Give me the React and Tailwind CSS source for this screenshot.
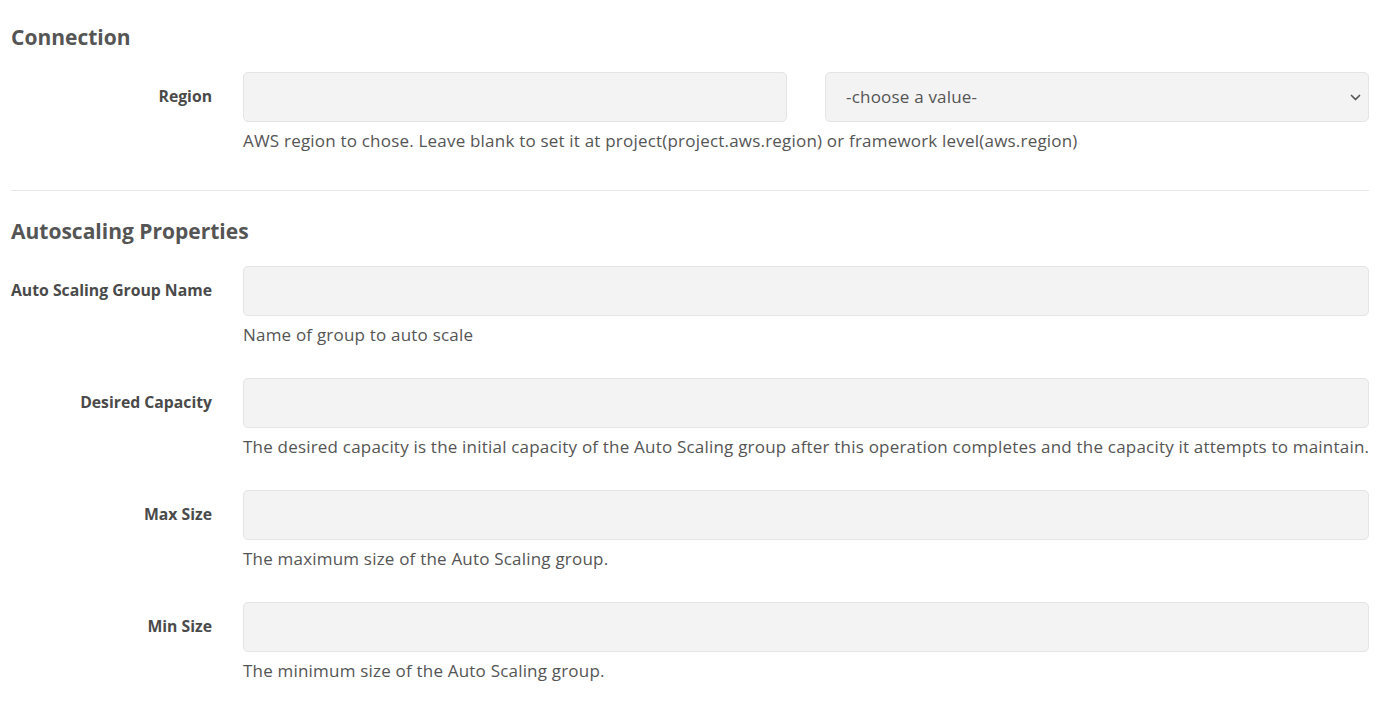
import React from "react";

const fields = [
  {
    label: "Auto Scaling Group Name",
    help: "Name of group to auto scale",
  },
  {
    label: "Desired Capacity",
    help: "The desired capacity is the initial capacity of the Auto Scaling group after this operation completes and the capacity it attempts to maintain.",
  },
  {
    label: "Max Size",
    help: "The maximum size of the Auto Scaling group.",
  },
  {
    label: "Min Size",
    help: "The minimum size of the Auto Scaling group.",
  },
];

function Field({ label, help, alignLeft }) {
  return (
    <div className="flex mb-[31px]">
      <div
        className={
          "w-[232px] shrink-0 pr-[31px] h-[50px] flex items-center text-[15.75px] font-bold text-[#4a4a4a] whitespace-nowrap " +
          (alignLeft ? "justify-start" : "justify-end")
        }
      >
        {label}
      </div>
      <div className="flex-1 min-w-0">
        <input className="w-full h-[50px] rounded-[5px] bg-[#f3f3f3] border border-[#e4e4e4] px-4 outline-none" />
        <div className="mt-[7px] leading-6 text-[17px] tracking-[0.2px] text-[#555] whitespace-nowrap">{help}</div>
      </div>
    </div>
  );
}

export default function App() {
  return (
    <div
      className="min-h-screen bg-white px-[11px] pt-[23px] text-[#555]"
      style={{ fontFamily: '"Open Sans", "Noto Sans", sans-serif' }}
    >
      {/* CONNECTION */}
      <h2 className="text-[21px] leading-7 font-bold text-[#555] mb-[21px]">Connection</h2>

      <div className="flex">
        <div className="w-[232px] shrink-0 pr-[31px] h-[50px] flex items-center justify-end text-[15.75px] font-bold text-[#4a4a4a]">
          Region
        </div>
        <div className="flex-1 min-w-0">
          <div className="grid grid-cols-2 gap-[38px]">
            <input className="w-full min-w-0 h-[50px] rounded-[5px] bg-[#f3f3f3] border border-[#e4e4e4] px-4 outline-none" />
            <div className="min-w-0 h-[50px] rounded-[5px] bg-[#f3f3f3] border border-[#e4e4e4] pl-5 pr-[7px] flex items-center justify-between">
              <span className="text-[17px] tracking-[0.2px] text-[#555]">-choose a value-</span>
              <svg width="11" height="7" viewBox="0 0 11 7" fill="none" stroke="#555" strokeWidth="1.7" strokeLinecap="round" strokeLinejoin="round">
                <path d="M1.5 1.5l4 4 4-4" />
              </svg>
            </div>
          </div>
          <div className="mt-[7px] leading-6 text-[17px] tracking-[0.2px] text-[#555] whitespace-nowrap">
            AWS region to chose. Leave blank to set it at project(project.aws.region) or framework level(aws.region)
          </div>
        </div>
      </div>

      <hr className="border-t border-[#e6e6e6] mt-[37px] mb-[26px]" />

      {/* AUTOSCALING */}
      <h2 className="text-[21px] leading-7 font-bold text-[#555] mb-[21px]">Autoscaling Properties</h2>

      {fields.map((f, i) => (
        <Field key={f.label} label={f.label} help={f.help} alignLeft={i === 0} />
      ))}
    </div>
  );
}
